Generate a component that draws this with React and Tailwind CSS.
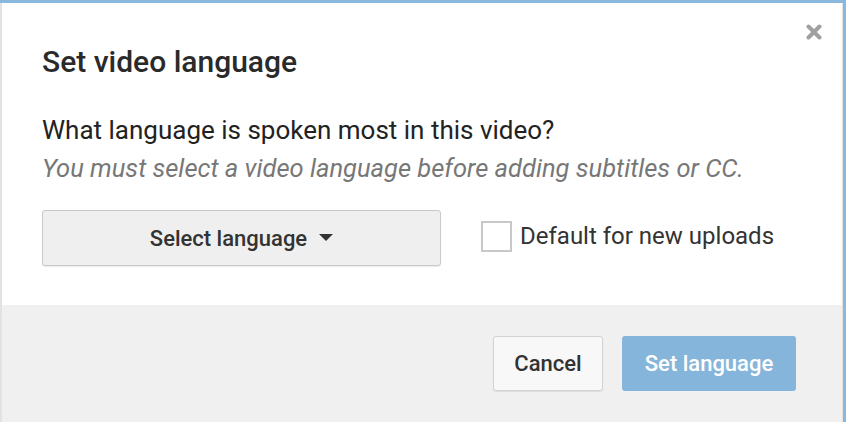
import React from "react";

export default function App() {
  return (
    <div className="w-[846px] h-[422px] bg-[#8ab8dc] pt-[3px] pr-[3px] font-['Roboto',sans-serif]">
      <div className="h-full flex flex-col bg-white border-l-2 border-r border-[#e2e2e2]">
        {/* body */}
        <div className="relative h-[302px] px-10">
          <button className="absolute right-[20px] top-[21px]">
            <svg width="16" height="16" viewBox="0 0 16 16">
              <path d="M2.5 2.5 L13.5 13.5 M13.5 2.5 L2.5 13.5" stroke="#a0a0a0" strokeWidth="4" strokeLinecap="round" />
            </svg>
          </button>
          <h2 className="pt-[40px] text-[30px] leading-[38px] font-medium text-[#2a2a2a]">Set video language</h2>
          <p className="mt-[33px] text-[26px] leading-[32px] text-[#222]">What language is spoken most in this video?</p>
          <p className="mt-[6px] text-[25.5px] leading-[32px] italic text-[#777]">
            You must select a video language before adding subtitles or CC.
          </p>
          <div className="mt-[26px] flex items-center">
            <button className="w-[399px] h-[56px] bg-[#efefef] border border-[#c9c9c9] rounded-[3px] shadow-[0_1px_1px_rgba(0,0,0,0.08)] flex items-center justify-center gap-3 text-[22px] font-medium text-[#333]">
              Select language
              <svg width="14" height="8" viewBox="0 0 14 8">
                <path d="M0 0 H14 L7 7 Z" fill="#333" />
              </svg>
            </button>
            <label className="ml-[40px] flex items-center gap-2 -mt-[4px]">
              <span className="w-[31px] h-[31px] border-2 border-[#c8c8c8] bg-white" />
              <span className="text-[24px] text-[#333]">Default for new uploads</span>
            </label>
          </div>
        </div>
        {/* footer */}
        <div className="flex-1 bg-[#f0f0f0] flex justify-end items-start pt-[31px] pr-[46px] gap-[19px]">
          <button className="w-[110px] h-[55px] bg-[#f8f8f8] border border-[#d3d3d3] rounded-[3px] shadow-[0_1px_1px_rgba(0,0,0,0.08)] text-[22px] font-medium text-[#333]">
            Cancel
          </button>
          <button className="w-[174px] h-[55px] bg-[#86b5dc] rounded-[3px] text-[22px] font-medium text-white">
            Set language
          </button>
        </div>
      </div>
    </div>
  );
}
